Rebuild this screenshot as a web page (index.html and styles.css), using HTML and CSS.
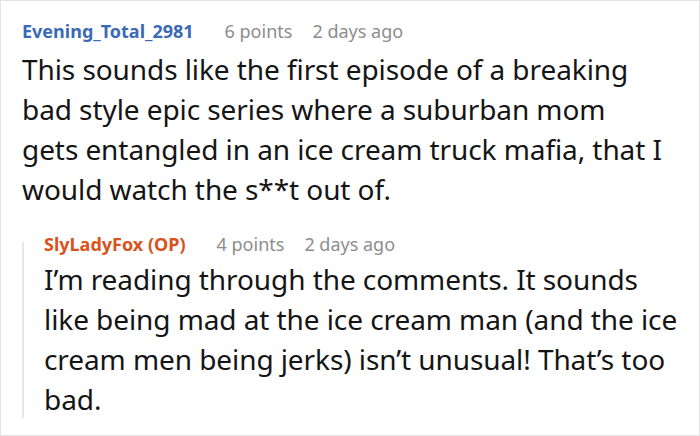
FILE: index.html
```html
<!DOCTYPE html>
<html>
<head>
<meta charset="utf-8">
<link rel="stylesheet" href="styles.css">
</head>
<body>
<div class="frame">
  <div class="comment">
    <div class="meta">
      <span class="user">Evening_Total_2981</span>
      <span class="info">6 points</span>
      <span class="info">2 days ago</span>
    </div>
    <p class="text">This sounds like the first episode of a breaking<br>bad style epic series where a suburban mom<br>gets entangled in an ice cream truck mafia, that I<br>would watch the s**t out of.</p>
    <div class="reply">
      <div class="bar"></div>
      <div class="reply-body">
        <div class="meta">
          <span class="user op">SlyLadyFox (OP)</span>
          <span class="info">4 points</span>
          <span class="info">2 days ago</span>
        </div>
        <p class="text reply-text">I’m reading through the comments. It sounds<br>like being mad at the ice cream man (and the ice<br>cream men being jerks) isn’t unusual! That’s too<br>bad.</p>
      </div>
    </div>
  </div>
</div>
</body>
</html>
```
FILE: styles.css
```css
html, body { margin: 0; padding: 0; background: #fff; }
.frame {
  width: 700px; height: 436px; box-sizing: border-box;
  border: 1px solid #e4e4e4;
  font-family: "Noto Sans", "Open Sans", sans-serif;
  overflow: hidden;
}
.comment { padding: 18px 0 0 21px; }
.meta { display: flex; gap: 31px; font-size: 18px; line-height: 24px; white-space: nowrap; }
.user { font-weight: bold; color: #3a6ab7; }
.user.op { color: #d9531c; }
.info { color: #8d8d8d; }
.meta .info + .info { margin-left: -11px; }
.text { margin: 6px 0 0; font-size: 28px; line-height: 40px; color: #151515; letter-spacing: -0.08px; white-space: nowrap; }
.reply { display: flex; margin-top: 23px; }
.bar { width: 2px; flex: none; background: #e6e6e6; margin: 10px 20px 1px 0; }
.reply-body { flex: 1; min-width: 0; }
.reply-text { margin-top: 3px; }
```
